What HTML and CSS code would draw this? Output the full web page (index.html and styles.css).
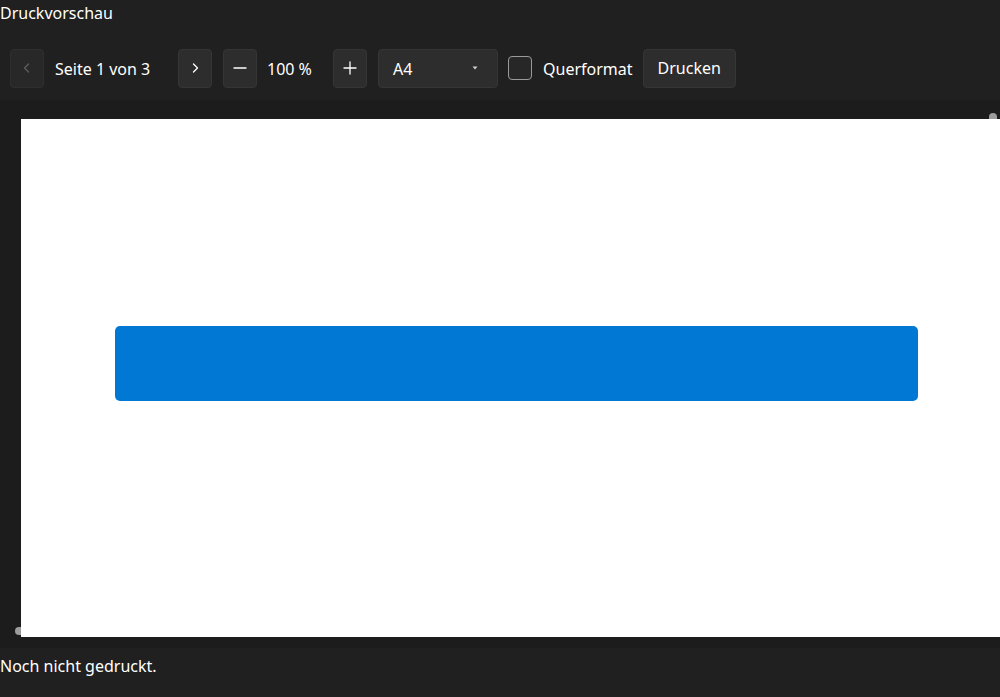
FILE: index.html
```html
<!DOCTYPE html>
<html lang="de">
<head>
  <meta charset="UTF-8" />
  <title>Druckvorschau</title>
  <link rel="stylesheet" href="styles.css">
</head>
<body>
  <div class="title">Druckvorschau</div>

  <div class="toolbar">
    <button class="icon-btn disabled" title="Vorherige Seite">
      <svg width="12" height="12" viewBox="0 0 12 12"><path d="M7.5 2 L3.5 6 L7.5 10" fill="none" stroke="currentColor" stroke-width="1.2" stroke-linecap="round" stroke-linejoin="round"/></svg>
    </button>
    <span class="page-label">Seite 1 von 3</span>
    <button class="icon-btn next" title="Nächste Seite">
      <svg width="12" height="12" viewBox="0 0 12 12"><path d="M4.5 2 L8.5 6 L4.5 10" fill="none" stroke="currentColor" stroke-width="1.3" stroke-linecap="round" stroke-linejoin="round"/></svg>
    </button>
    <button class="icon-btn" title="Verkleinern">
      <svg width="14" height="14" viewBox="0 0 14 14"><path d="M1 7 H13" stroke="currentColor" stroke-width="1.3" stroke-linecap="round"/></svg>
    </button>
    <span class="zoom-label">100 %</span>
    <button class="icon-btn plus" title="Vergrößern">
      <svg width="14" height="14" viewBox="0 0 14 14"><path d="M1 7 H13 M7 1 V13" stroke="currentColor" stroke-width="1.3" stroke-linecap="round"/></svg>
    </button>
    <div class="combo">
      <span>A4</span>
      <svg width="8" height="6" viewBox="0 0 8 6"><path d="M1.5 1.5 H6.5 L4 4.5 Z" fill="currentColor"/></svg>
    </div>
    <label class="check">
      <span class="box"></span>
      <span>Querformat</span>
    </label>
    <button class="text-btn">Drucken</button>
  </div>

  <div class="preview">
    <span class="thumb thumb-v"></span>
    <span class="thumb thumb-h"></span>
    <div class="sheet">
      <div class="bar"></div>
    </div>
  </div>

  <div class="status">Noch nicht gedruckt.</div>
</body>
</html>
```

FILE: styles.css
```css
* { box-sizing: border-box; }
html, body {
  margin: 0;
  height: 100%;
}
body {
  background: #202020;
  color: #ffffff;
  font-family: 'Noto Sans', 'Open Sans', sans-serif;
  font-size: 16px;
  overflow: hidden;
  display: flex;
  flex-direction: column;
}
.title {
  height: 28px;
  line-height: 26px;
}
.toolbar {
  display: flex;
  align-items: center;
  height: 72px;
  padding: 20px 0 12px 10px;
}
.toolbar > * { flex-shrink: 0; }
.toolbar span { padding-top: 1px; }
button {
  font-family: inherit;
  font-size: 16px;
  color: #fff;
  cursor: pointer;
}
.icon-btn {
  width: 34px;
  height: 39px;
  padding: 0;
  background: #2d2d2d;
  border: 1px solid #353535;
  border-radius: 4px;
  display: flex;
  align-items: center;
  justify-content: center;
  margin-right: 10px;
}
.icon-btn.next { margin-right: 11px; }
.icon-btn.plus { margin-right: 11px; }
.icon-btn.disabled {
  background: #282828;
  border-color: #2f2f2f;
  color: #5f5f5f;
}
.page-label {
  width: 124px;
  padding-left: 1px;
}
.zoom-label {
  width: 66px;
}
.combo {
  width: 120px;
  height: 39px;
  background: #2d2d2d;
  border: 1px solid #353535;
  border-radius: 4px;
  display: flex;
  align-items: center;
  justify-content: space-between;
  padding: 0 18px 0 14px;
  margin-right: 10px;
  color: #fff;
}
.combo svg { color: #cfcfcf; }
.check {
  display: flex;
  align-items: center;
  margin-right: 10px;
}
.check .box {
  width: 24px;
  height: 24px;
  padding: 0;
  border: 1px solid #9a9a9a;
  border-radius: 4px;
  background: #272727;
  margin-right: 11px;
}
.text-btn {
  height: 39px;
  padding: 0 14px;
  background: #2d2d2d;
  border: 1px solid #353535;
  border-radius: 4px;
}
.preview {
  position: relative;
  height: 548px;
  background: #1c1c1c;
  padding: 19px 0 0 21px;
  overflow: hidden;
}
.sheet {
  position: relative;
  width: 1100px;
  height: 518px;
  background: #ffffff;
  padding: 207px 0 0 94px;
}
.bar {
  width: 803px;
  height: 75px;
  background: #0078d4;
  border-radius: 5px;
}
.thumb {
  position: absolute;
  background: #9c9c9c;
  border-radius: 4px;
}
.thumb-v {
  left: 989px;
  top: 13px;
  width: 8px;
  height: 20px;
}
.thumb-h {
  left: 15px;
  top: 527px;
  width: 20px;
  height: 8px;
}
.status {
  flex: 1;
  padding-top: 7px;
  line-height: 22px;
}
```
